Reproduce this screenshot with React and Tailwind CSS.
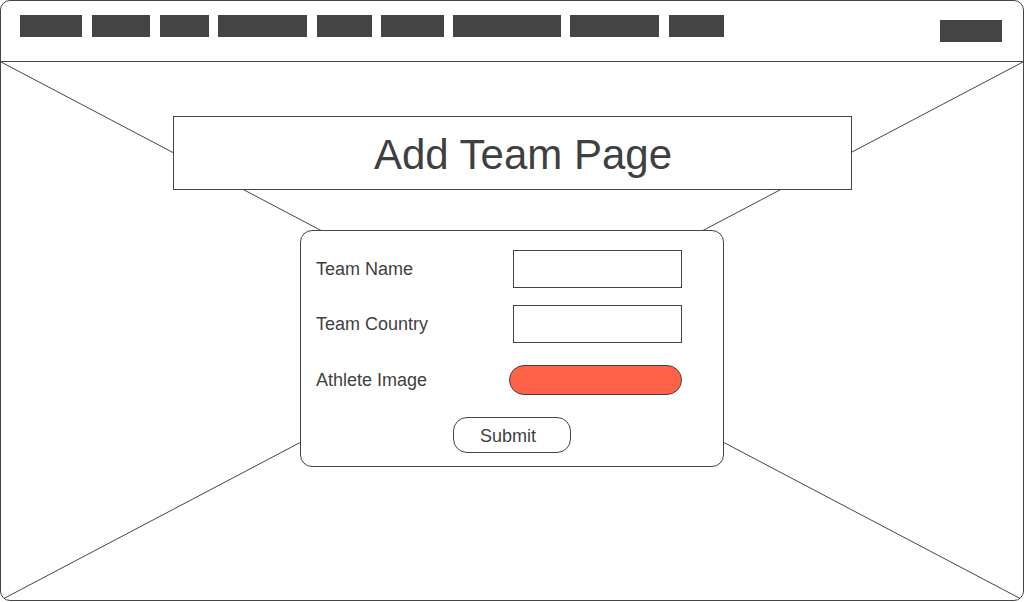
import React from 'react'

const navItems = [
  'w-[62px]',
  'w-[58px] ml-[10px]',
  'w-[49px] ml-[10px]',
  'w-[89px] ml-[9px]',
  'w-[55px] ml-[10px]',
  'w-[63px] ml-[9px]',
  'w-[108px] ml-[9px]',
  'w-[89px] ml-[9px]',
  'w-[55px] ml-[10px]',
]

const Field = ({ label, className, children }) => (
  <div className={`flex items-center ${className}`}>
    <span className="w-[196px] text-[18px] leading-none text-[#3f3f3f]">{label}</span>
    {children}
  </div>
)

export default function App() {
  return (
    <div className="w-[1024px] h-[602px] bg-white" style={{ fontFamily: '"Liberation Sans", Arial, sans-serif' }}>
      <div className="w-[1024px] h-[601px] border border-[#444] rounded-[10px] overflow-hidden flex flex-col">
        {/* Header */}
        <div className="h-[61px] shrink-0 border-b border-[#444] flex items-start px-[19px]">
          <div className="flex mt-[14px]">
            {navItems.map((c, i) => (
              <div key={i} className={`h-[22px] bg-[#444] ${c}`} />
            ))}
          </div>
          <div className="ml-auto mt-[19px] mr-[2px] w-[62px] h-[22px] bg-[#444]" />
        </div>

        {/* Body */}
        <div className="relative flex-1 flex flex-col items-center">
          <svg className="absolute inset-0 w-full h-full" preserveAspectRatio="none" viewBox="0 0 1022 538">
            <line x1="0" y1="0" x2="1022" y2="538" stroke="#444" strokeWidth="1" vectorEffect="non-scaling-stroke" />
            <line x1="1022" y1="0" x2="0" y2="538" stroke="#444" strokeWidth="1" vectorEffect="non-scaling-stroke" />
          </svg>

          <div className="relative mt-[54px] w-[679px] h-[74px] border border-[#444] bg-white flex items-center justify-center">
            <h1 className="text-[42px] leading-none text-[#3f3f3f] mt-[3px] ml-[22px]">Add Team Page</h1>
          </div>

          <div className="relative mt-[40px] w-[424px] h-[237px] border border-[#444] rounded-[12px] bg-white pl-[15px] pt-[19px] flex flex-col">
            <Field label="Team Name">
              <div className="ml-[1px] w-[169px] h-[38px] border border-[#444] bg-white" />
            </Field>
            <Field label="Team Country" className="mt-[17px]">
              <div className="ml-[1px] w-[169px] h-[38px] border border-[#444] bg-white" />
            </Field>
            <Field label="Athlete Image" className="mt-[22px]">
              <div className="-ml-[3px] w-[173px] h-[30px] border border-[#444] rounded-full bg-[#ff6347]" />
            </Field>
            <div className="mt-[22px] ml-[137px] w-[118px] h-[36px] border border-[#444] rounded-[14px] flex items-center justify-center text-[18px] text-[#3f3f3f]">
              <span className="-ml-[8px] mt-[2px]">Submit</span>
            </div>
          </div>
        </div>
      </div>
    </div>
  )
}
